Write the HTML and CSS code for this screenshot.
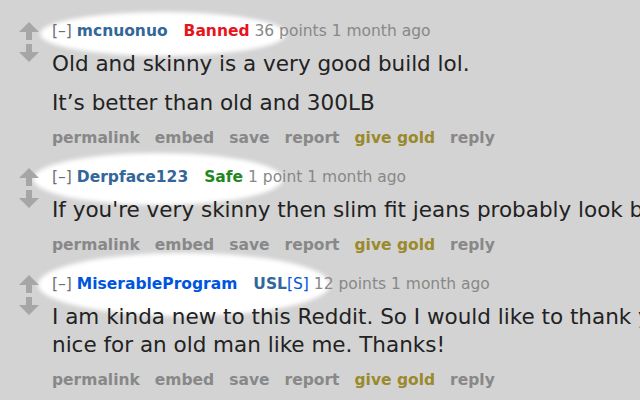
FILE: index.html
```html
<!DOCTYPE html>
<html lang="en">
<head>
    <meta charset="UTF-8">
    <title>Comments</title>
    <link rel="stylesheet" href="styles.css">
</head>
<body>
    <div class="thread">
        <ul class="buttons prev">
            <li>permalink</li>
            <li>embed</li>
            <li>save</li>
            <li>report</li>
            <li class="gold">give gold</li>
            <li>reply</li>
        </ul>

        <div class="comment">
            <span class="highlight hl-1"></span>
            <div class="midcol">
                <svg class="arrows" width="20" height="40" viewBox="0 0 20 40">
                    <polygon points="10,0 20,10 13,10 13,18 7,18 7,10 0,10"/>
                    <polygon points="7,22 13,22 13,30 20,30 10,40 0,30 7,30"/>
                </svg>
            </div>
            <div class="entry">
                <p class="tagline"><span class="expand">[–]</span> <span class="author">mcnuonuo</span><span class="flair banned">Banned</span> 36 points 1 month ago</p>
                <div class="md">
                    <p>Old and skinny is a very good build lol.</p>
                    <p>It’s better than old and 300LB</p>
                </div>
                <ul class="buttons">
                    <li>permalink</li>
                    <li>embed</li>
                    <li>save</li>
                    <li>report</li>
                    <li class="gold">give gold</li>
                    <li>reply</li>
                </ul>
            </div>
        </div>

        <div class="comment">
            <span class="highlight hl-2"></span>
            <div class="midcol">
                <svg class="arrows" width="20" height="40" viewBox="0 0 20 40">
                    <polygon points="10,0 20,10 13,10 13,18 7,18 7,10 0,10"/>
                    <polygon points="7,22 13,22 13,30 20,30 10,40 0,30 7,30"/>
                </svg>
            </div>
            <div class="entry">
                <p class="tagline"><span class="expand">[–]</span> <span class="author">Derpface123</span><span class="flair safe">Safe</span> 1 point 1 month ago</p>
                <div class="md">
                    <p>If you're very skinny then slim fit jeans probably look better on you.</p>
                </div>
                <ul class="buttons">
                    <li>permalink</li>
                    <li>embed</li>
                    <li>save</li>
                    <li>report</li>
                    <li class="gold">give gold</li>
                    <li>reply</li>
                </ul>
            </div>
        </div>

        <div class="comment">
            <span class="highlight hl-3"></span>
            <div class="midcol">
                <svg class="arrows" width="20" height="40" viewBox="0 0 20 40">
                    <polygon points="10,0 20,10 13,10 13,18 7,18 7,10 0,10"/>
                    <polygon points="7,22 13,22 13,30 20,30 10,40 0,30 7,30"/>
                </svg>
            </div>
            <div class="entry">
                <p class="tagline"><span class="expand">[–]</span> <span class="author submitter">MiserableProgram</span><span class="flair usl">USL<span class="op">[S]</span></span> 12 points 1 month ago</p>
                <div class="md">
                    <p>I am kinda new to this Reddit. So I would like to thank you all for being so<br>nice for an old man like me. Thanks!</p>
                </div>
                <ul class="buttons">
                    <li>permalink</li>
                    <li>embed</li>
                    <li>save</li>
                    <li>report</li>
                    <li class="gold">give gold</li>
                    <li>reply</li>
                </ul>
            </div>
        </div>
    </div>
</body>
</html>
```

FILE: styles.css
```css
:root { --bg: #d3d3d3; --text: #222; --muted: #888; --author: #336699; --submitter: #0055df; --gold: #9a8a2c; --arrow: #a6a6a6; }
html, body { margin: 0; height: 100%; overflow: hidden; }
body { background: var(--bg); color: var(--text); font-family: "DejaVu Sans", Verdana, sans-serif; }
.thread { margin-top: -27px; padding-left: 52px; width: 1100px; }
.comment { position: relative; display: flex; margin-left: -52px; }
.midcol { width: 52px; flex: none; display: flex; justify-content: center; padding-top: 1px; padding-left: 6px; box-sizing: border-box; }
.arrows { fill: var(--arrow); }
.entry { flex: 1; }
.tagline { margin: 0; font-size: 15.5px; line-height: 20px; color: var(--muted); white-space: nowrap; }
.expand { color: #6b6f78; }
.author { color: var(--author); font-weight: bold; }
.author.submitter { color: var(--submitter); }
.flair { font-weight: bold; margin-left: 16px; }
.banned { color: #e8141c; }
.safe { color: #228822; }
.usl { color: var(--author); }
.usl .op { color: var(--submitter); font-weight: normal; }
.md { font-size: 21.5px; line-height: 28px; }
.md p { margin: 9px 0 11px; white-space: nowrap; }
.buttons { list-style: none; margin: 9px 0 19px; padding: 0; display: flex; gap: 15px; font-size: 15.5px; font-weight: bold; line-height: 20px; color: var(--muted); }
.buttons.prev { margin-bottom: 19px; }
.gold { color: var(--gold); }
.highlight { position: absolute; z-index: -1; background: #fff; border-radius: 50%; filter: blur(2px); }
.hl-1 { left: 40px; top: -9px; width: 246px; height: 44px; }
.hl-2 { left: 33px; top: -14px; width: 250px; height: 52px; }
.hl-3 { left: 38px; top: -21px; width: 292px; height: 63px; }
```
